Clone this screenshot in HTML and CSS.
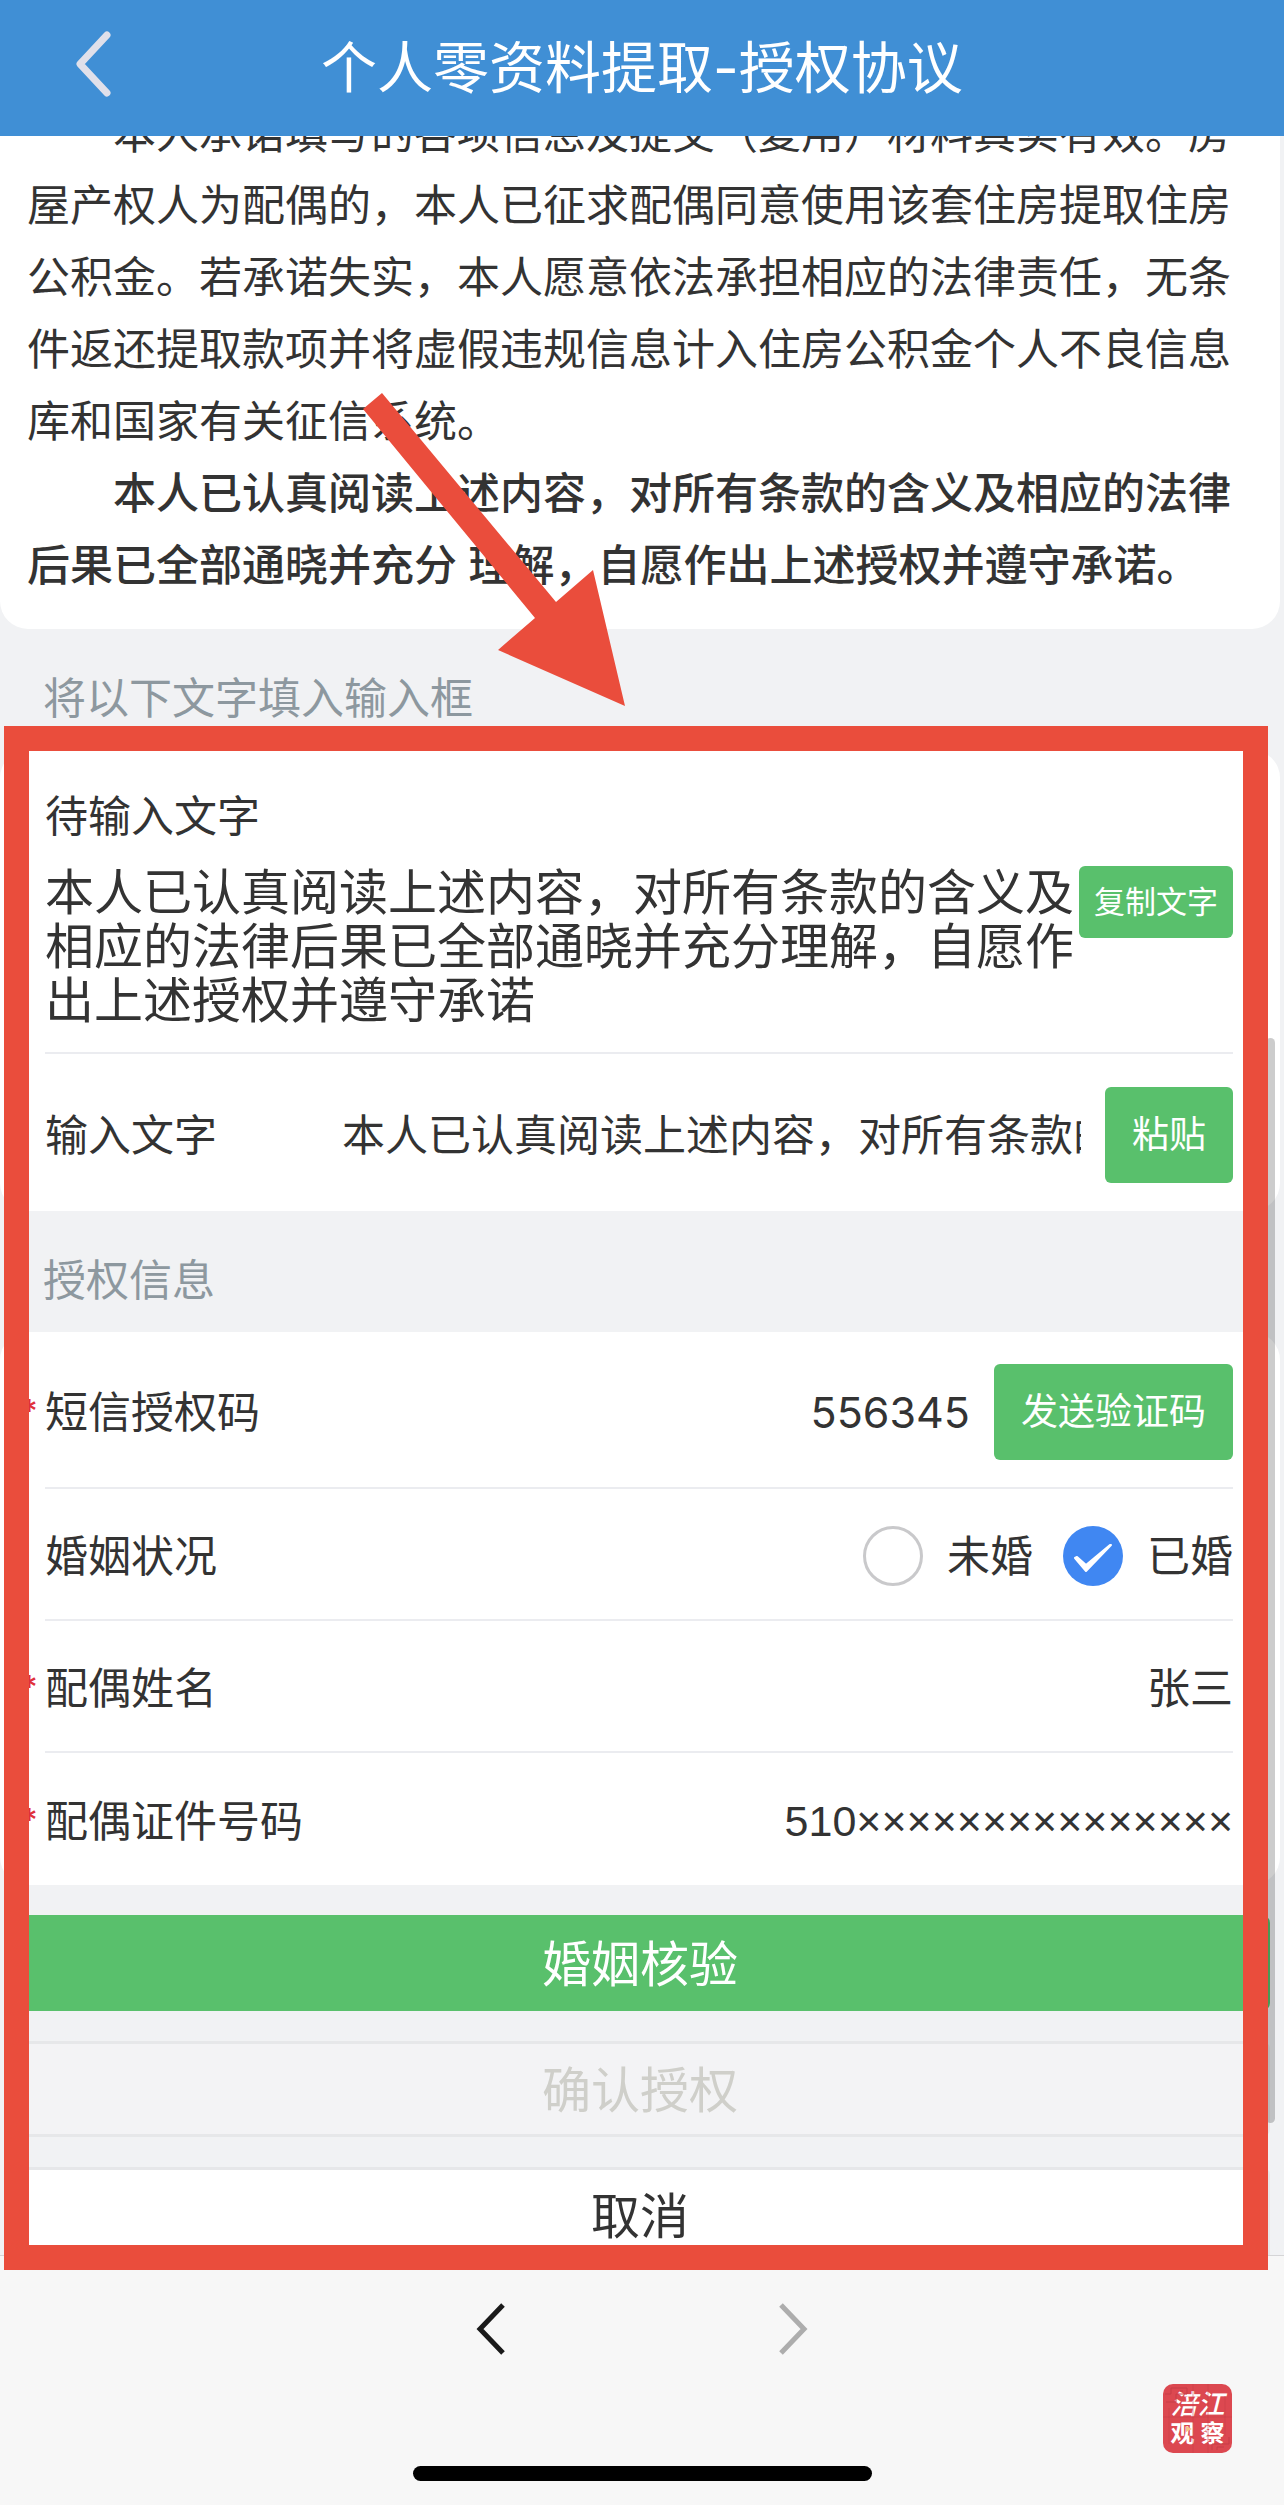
FILE: index.html
```html
<!DOCTYPE html>
<html lang="zh-CN">

<head>
    <meta charset="UTF-8">
    <meta name="viewport" content="width=device-width, initial-scale=1.0">
    <title>个人零资料提取-授权协议</title>
    <link rel="stylesheet" href="styles.css">
</head>

<body>
    <div class="app">
        <!-- Top bar -->
        <header class="topbar">
            <button class="back" type="button" aria-label="返回">
                <svg width="40" height="68" viewBox="0 0 40 68">
                    <path d="M35 5 L8 34 L35 63" />
                </svg>
            </button>
            <h1>个人零资料提取-授权协议</h1>
        </header>

        <main class="content">
            <!-- Agreement text -->
            <section class="card agreement">
                <p>本人承诺填写的各项信息及提交（复用）材料真实有效。房屋产权人为配偶的，本人已征求配偶同意使用该套住房提取住房公积金。若承诺失实，本人愿意依法承担相应的法律责任，无条件返还提取款项并将虚假违规信息计入住房公积金个人不良信息库和国家有关征信系统。</p>
                <p class="strong">本人已认真阅读上述内容，对所有条款的含义及相应的法律后果已全部通晓并充分 理解，自愿作出上述授权并遵守承诺。</p>
            </section>

            <form>
                <h2 class="section-title">将以下文字填入输入框</h2>
                <section class="card">
                    <div class="copy-block">
                        <h3>待输入文字</h3>
                        <div class="copy-row">
                            <p>本人已认真阅读上述内容，对所有条款的含义及相应的法律后果已全部通晓并充分理解，自愿作出上述授权并遵守承诺</p>
                            <button class="btn btn-small" type="button">复制文字</button>
                        </div>
                    </div>
                    <div class="row row-tall">
                        <label class="wide-label" for="statement">输入文字</label>
                        <input id="statement" type="text" value="本人已认真阅读上述内容，对所有条款的含义及相应的法律后果已全部通晓并充分理解，自愿作出上述授权并遵守承诺">
                        <button class="btn" type="button">粘贴</button>
                    </div>
                </section>

                <h2 class="section-title">授权信息</h2>
                <section class="card">
                    <div class="row row-tall required">
                        <label for="sms-code">短信授权码</label>
                        <input id="sms-code" class="right" type="text" value="556345">
                        <button class="btn" type="button">发送验证码</button>
                    </div>
                    <div class="row" role="radiogroup" aria-labelledby="marriage-label">
                        <span id="marriage-label" class="row-name">婚姻状况</span>
                        <div class="radios">
                            <label><input type="radio" name="marriage" value="single">未婚</label>
                            <label><input type="radio" name="marriage" value="married" checked>已婚</label>
                        </div>
                    </div>
                    <div class="row required">
                        <label for="spouse-name">配偶姓名</label>
                        <input id="spouse-name" class="right" type="text" value="张三">
                    </div>
                    <div class="row required">
                        <label for="spouse-id">配偶证件号码</label>
                        <input id="spouse-id" class="right id-number" type="text" value="510×××××××××××××××">
                    </div>
                </section>

                <div class="actions">
                    <button class="action action-primary" type="button">婚姻核验</button>
                    <button class="action" type="submit" disabled>确认授权</button>
                    <button class="action action-plain" type="button">取消</button>
                </div>
            </form>
        </main>

        <!-- Browser toolbar -->
        <footer class="toolbar">
            <nav>
                <button type="button" aria-label="后退">
                    <svg width="32" height="56" viewBox="0 0 32 56">
                        <path d="M28 4 L5 28 L28 52" stroke="#1a1a1a" />
                    </svg>
                </button>
                <button type="button" aria-label="前进">
                    <svg width="32" height="56" viewBox="0 0 32 56">
                        <path d="M4 4 L27 28 L4 52" stroke="#adadad" />
                    </svg>
                </button>
            </nav>
            <div class="home-indicator"></div>
        </footer>

        <!-- Things that float over the page -->
        <div class="scrollbar"></div>
        <div class="highlight"></div>
        <svg class="arrow" width="262" height="314" viewBox="0 0 262 314">
            <polygon points="19,0 193,209 230,177 262,313 135,257 172,225 0,16" fill="#ea4d3c" />
        </svg>
        <div class="stamp">
            <svg class="stamp-pattern" width="69" height="69" viewBox="0 0 69 69">
                <path d="M2 10 H8 V4 H24 V10 H13 V18 H3 M17 7 H20 M49 66 V60 H66 V53 M54 66 V63 H61" />
                <path d="M30 0 V69 M45 0 V69 M0 33 H69 M62 12 V52 M6 24 V60" opacity=".5" />
            </svg>
            <span class="brush">涪江</span>
            <span class="block"><span>观</span><span>察</span></span>
            <svg class="stamp-play" width="6" height="6" viewBox="0 0 6 6">
                <path d="M0 0 L6 3 L0 6 Z" />
            </svg>
        </div>
    </div>
</body>

</html>
```

FILE: styles.css
```css
/* General reset */
* {
    margin: 0;
    padding: 0;
    box-sizing: border-box;
}

body {
    background: #f1f2f4;
    color: #333;
    font-family: Inter, "Noto Sans CJK SC", sans-serif;
    font-size: 43px;
    line-height: 72px;
}

button,
input {
    font: inherit;
    color: inherit;
    border: none;
    background: none;
}

h1,
h2,
h3 {
    font-weight: 400;
}

.app {
    position: relative;
    display: flex;
    flex-direction: column;
    height: 100vh;
    overflow: hidden;
}

/* Top bar */
.topbar {
    position: relative;
    z-index: 1;
    flex: none;
    display: flex;
    align-items: center;
    justify-content: center;
    height: 136px;
    background: #408fd5;
    color: #fff;
}

.topbar h1 {
    font-size: 56px;
    font-weight: 400;
}

.back {
    position: absolute;
    left: 72px;
    top: 30px;
    height: 68px;
}

.back svg {
    display: block;
    fill: none;
    stroke: #e0e0ea;
    stroke-width: 7;
    stroke-linecap: round;
    stroke-linejoin: round;
}

/* Scrolled content */
.content {
    flex: 1;
    min-height: 0;
    margin-right: 4px;
}

.card {
    background: #fff;
    border-radius: 28px;
}

.agreement {
    margin-top: -39px;
    padding: 0 27px 28px;
    border-top-left-radius: 0;
    border-top-right-radius: 0;
}

.agreement p {
    text-indent: 2em;
}

.agreement .strong {
    font-weight: 500;
}

.section-title {
    padding: 33px 43px 16px;
    font-size: 43px;
    color: #8d989f;
}

/* Text to copy */
.copy-block {
    margin: 0 47px 0 45px;
    padding: 30px 0 24px;
    border-bottom: 2px solid #ebecf0;
}

.copy-block h3 {
    margin-bottom: 14px;
    font-size: 43px;
}

.copy-row {
    display: flex;
    align-items: flex-start;
    justify-content: space-between;
}

.copy-row p {
    flex: 1;
    font-size: 49px;
    line-height: 54px;
}

/* Form rows */
.row {
    position: relative;
    display: flex;
    align-items: center;
    height: 132px;
    margin: 0 47px 0 45px;
    padding-top: 4px;
    border-bottom: 2px solid #ebecf0;
}

.row:last-child {
    border-bottom: none;
}

.row-tall {
    height: 157px;
}

.row label,
.row-name {
    flex: none;
}

.row .wide-label {
    width: 297px;
}

.row input[type="text"] {
    flex: 1;
    min-width: 0;
    height: 72px;
    outline: none;
}

.row .right {
    text-align: right;
}

.row .id-number {
    font-family: "Liberation Sans", Arial, sans-serif;
}

.required::before {
    content: "*";
    position: absolute;
    left: -24px;
    font-size: 32px;
    font-weight: 500;
    color: #e0303a;
}

.btn {
    flex: none;
    height: 96px;
    margin-left: 24px;
    padding: 0 27px;
    border-radius: 6px;
    background: #59c06c;
    color: #fff;
    font-size: 37px;
}

.btn-small {
    height: 72px;
    margin-left: 4px;
    padding: 0 15px;
    font-size: 31px;
}

/* Radios */
.radios {
    display: flex;
    gap: 30px;
    margin-left: auto;
}

.radios label {
    display: flex;
    align-items: center;
    gap: 24px;
}

.radios input {
    appearance: none;
    width: 60px;
    height: 60px;
    border: 3px solid #c9c9cb;
    border-radius: 50%;
}

.radios input:checked {
    border: none;
    background: #4087f2 url("data:image/svg+xml,%3Csvg xmlns='http://www.w3.org/2000/svg' viewBox='0 0 60 60'%3E%3Cpath d='M12 32 L23 45 L48 19 L47 19 L23 39 L14 31 Z' fill='white' stroke='white' stroke-width='2' stroke-linejoin='round'/%3E%3C/svg%3E");
}

/* Bottom actions */
.actions {
    display: flex;
    flex-direction: column;
    gap: 30px;
    padding: 30px 10px 0;
}

.action {
    height: 96px;
    padding-top: 4px;
    border: 3px solid #e6e7e9;
    border-radius: 8px;
    background: #f3f3f5;
    font-size: 49px;
}

.action:disabled {
    color: #cfcfca;
}

.action-primary {
    border-color: #59c06c;
    background: #59c06c;
    color: #fff;
}

.action-plain {
    background: #fff;
}

/* Browser toolbar */
.toolbar {
    position: relative;
    z-index: 1;
    flex: none;
    display: flex;
    flex-direction: column;
    align-items: center;
    justify-content: space-between;
    height: 250px;
    padding: 45px 0 24px;
    border-top: 1px solid #d5d5d7;
    background: #f7f7f7;
}

.toolbar nav {
    display: flex;
    gap: 270px;
}

.toolbar svg {
    display: block;
    fill: none;
    stroke-width: 5;
}

.home-indicator {
    width: 459px;
    height: 15px;
    border-radius: 8px;
    background: #000;
}

/* Overlays */
.scrollbar {
    position: absolute;
    right: 9px;
    top: 1038px;
    bottom: 382px;
    width: 9px;
    border-radius: 5px;
    background: rgba(0, 0, 0, 0.2);
}

.highlight {
    position: absolute;
    z-index: 2;
    top: 726px;
    right: 16px;
    bottom: 235px;
    left: 4px;
    border: 25px solid #ea4d3c;
    pointer-events: none;
}

.arrow {
    position: absolute;
    z-index: 2;
    left: 363px;
    top: 393px;
    pointer-events: none;
}

.stamp {
    position: absolute;
    z-index: 2;
    right: 52px;
    bottom: 52px;
    display: flex;
    flex-direction: column;
    align-items: center;
    justify-content: center;
    width: 69px;
    height: 69px;
    border-radius: 10px;
    background: #dc4850;
    color: #fff;
    font-size: 27px;
    font-weight: 500;
    line-height: 29px;
    overflow: hidden;
}

.stamp .brush {
    font-style: italic;
}

.stamp .block {
    display: flex;
    gap: 6px;
    font-size: 24px;
    font-weight: 700;
}

.stamp-pattern {
    position: absolute;
    fill: none;
    stroke: #c63c46;
}

.stamp-play {
    position: absolute;
    left: 23px;
    top: 42px;
    fill: #f6c489;
}
```
